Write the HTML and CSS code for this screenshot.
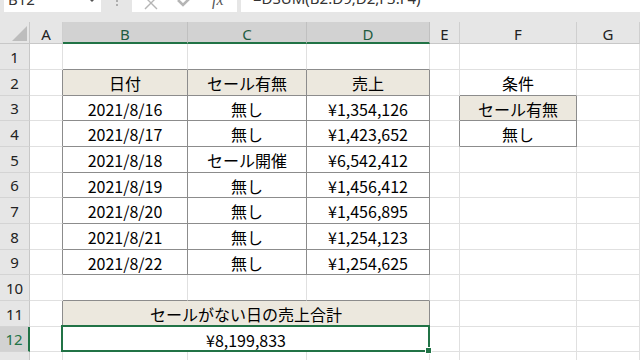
FILE: index.html
```html
<!DOCTYPE html>
<html lang="ja">
<head>
<meta charset="utf-8">
<link rel="stylesheet" href="styles.css">
</head>
<body>
<div class="app">
  <div class="fbar">
    <div class="namebox"><span class="nb-text">B12</span><svg class="nb-arrow" width="8" height="5" viewBox="0 0 8 5"><path d="M0 0 L4 4 L8 0 Z" fill="#555"/></svg></div>
    <div class="fsep"><svg width="4" height="10" viewBox="0 0 4 10"><circle cx="2" cy="1" r="1" fill="#9a9a9a"/><circle cx="2" cy="5" r="1" fill="#9a9a9a"/></svg></div>
    <div class="fbtns">
      <svg class="ico" width="14" height="12" viewBox="0 0 14 12"><path d="M1 -3 L13 9 M13 -3 L1 9" stroke="#b5b5b5" stroke-width="1.4" fill="none"/></svg>
      <svg class="ico" width="16" height="12" viewBox="0 0 16 12"><path d="M1 0 L6 5 L15 -4" stroke="#b5b5b5" stroke-width="2.6" fill="none"/></svg>
      <span class="fx">fx</span>
    </div>
    <div class="formula"><span class="f-text">=DSUM(B2:D9,D2,F3:F4)</span></div>
  </div>
  <div class="sheet">
    <div class="corner"><svg width="30" height="22" viewBox="0 0 30 22"><path d="M27 4 L27 19 L12 19 Z" fill="#bdbdbd"/></svg></div>
    <div class="ch">A</div>
    <div class="ch sel">B</div>
    <div class="ch sel">C</div>
    <div class="ch sel">D</div>
    <div class="ch">E</div>
    <div class="ch">F</div>
    <div class="ch">G</div>

    <div class="rh">1</div>
    <div class="c"></div>
    <div class="c tt"></div>
    <div class="c tt"></div>
    <div class="c tt"></div>
    <div class="c"></div>
    <div class="c"></div>
    <div class="c"></div>

    <div class="rh">2</div>
    <div class="c tl"></div>
    <div class="c t h">日付</div>
    <div class="c t h">セール有無</div>
    <div class="c t h">売上</div>
    <div class="c"></div>
    <div class="c tt">条件</div>
    <div class="c"></div>

    <div class="rh">3</div>
    <div class="c tl"></div>
    <div class="c t">2021/8/16</div>
    <div class="c t">無し</div>
    <div class="c t">¥1,354,126</div>
    <div class="c tl"></div>
    <div class="c t h">セール有無</div>
    <div class="c"></div>

    <div class="rh">4</div>
    <div class="c tl"></div>
    <div class="c t">2021/8/17</div>
    <div class="c t">無し</div>
    <div class="c t">¥1,423,652</div>
    <div class="c tl"></div>
    <div class="c t">無し</div>
    <div class="c"></div>

    <div class="rh">5</div>
    <div class="c tl"></div>
    <div class="c t">2021/8/18</div>
    <div class="c t">セール開催</div>
    <div class="c t">¥6,542,412</div>
    <div class="c"></div>
    <div class="c"></div>
    <div class="c"></div>

    <div class="rh">6</div>
    <div class="c tl"></div>
    <div class="c t">2021/8/19</div>
    <div class="c t">無し</div>
    <div class="c t">¥1,456,412</div>
    <div class="c"></div>
    <div class="c"></div>
    <div class="c"></div>

    <div class="rh">7</div>
    <div class="c tl"></div>
    <div class="c t">2021/8/20</div>
    <div class="c t">無し</div>
    <div class="c t">¥1,456,895</div>
    <div class="c"></div>
    <div class="c"></div>
    <div class="c"></div>

    <div class="rh">8</div>
    <div class="c tl"></div>
    <div class="c t">2021/8/21</div>
    <div class="c t">無し</div>
    <div class="c t">¥1,254,123</div>
    <div class="c"></div>
    <div class="c"></div>
    <div class="c"></div>

    <div class="rh">9</div>
    <div class="c tl"></div>
    <div class="c t">2021/8/22</div>
    <div class="c t">無し</div>
    <div class="c t">¥1,254,625</div>
    <div class="c"></div>
    <div class="c"></div>
    <div class="c"></div>

    <div class="rh">10</div>
    <div class="c"></div>
    <div class="c tt"></div>
    <div class="c tt"></div>
    <div class="c tt"></div>
    <div class="c"></div>
    <div class="c"></div>
    <div class="c"></div>

    <div class="rh">11</div>
    <div class="c tl"></div>
    <div class="c t h span3">セールがない日の売上合計</div>
    <div class="c"></div>
    <div class="c"></div>
    <div class="c"></div>

    <div class="rh sel">12</div>
    <div class="c tl"></div>
    <div class="c t span3 active">¥8,199,833<span class="handle"></span></div>
    <div class="c"></div>
    <div class="c"></div>
    <div class="c"></div>

    <div class="rh">13</div>
    <div class="c"></div>
    <div class="c"></div>
    <div class="c"></div>
    <div class="c"></div>
    <div class="c"></div>
    <div class="c"></div>
    <div class="c"></div>
  </div>
</div>
</body>
</html>
```

FILE: styles.css
```css
* { box-sizing: border-box; }
html, body {
  margin: 0;
  padding: 0;
  width: 640px;
  height: 360px;
  overflow: hidden;
  background: #ffffff;
}
.app {
  width: 640px;
  height: 360px;
  overflow: hidden;
  display: flex;
  flex-direction: column;
}
.fbar {
  height: 22px;
  flex: none;
  background: #e6e6e6;
  display: flex;
  align-items: flex-start;
}
.namebox {
  margin-left: 4px;
  width: 97px;
  height: 12px;
  background: #fff;
  overflow: hidden;
  position: relative;
  display: flex;
  align-items: flex-start;
}
.nb-text {
  font-family: "Noto Sans", sans-serif;
  font-size: 15px;
  line-height: 15px;
  color: #333;
  margin-top: -8px;
  margin-left: 4px;
  flex: 1;
}
.nb-arrow {
  margin-right: 5px;
  margin-top: -2px;
}
.fsep {
  width: 31px;
  height: 12px;
  display: flex;
  justify-content: center;
}
.fbtns {
  width: 105px;
  height: 12px;
  background: #fff;
  display: flex;
  align-items: flex-start;
  padding-left: 12px;
  gap: 19px;
  overflow: hidden;
}
.fx {
  font-family: "Liberation Serif", serif;
  font-style: italic;
  font-size: 16px;
  line-height: 16px;
  color: #555;
  margin-top: -8px;
}
.formula {
  margin-left: 4px;
  flex: 1;
  height: 12px;
  background: #fff;
  overflow: hidden;
}
.f-text {
  display: block;
  font-family: "Noto Sans", sans-serif;
  font-size: 15px;
  line-height: 15px;
  color: #333;
  margin-top: -9px;
  margin-left: 12px;
}
.sheet {
  flex: 1;
  display: grid;
  grid-template-columns: 30px 33px 125px 119px 123px 30px 117px 63px;
  grid-template-rows: 22px 26px 26px 25px 26px 26px 25px 26px 26px 25px 26px 26px 25px 26px;
  overflow: hidden;
}
.corner {
  background: #e6e6e6;
  border-right: 1px solid #c8c8c8;
  border-bottom: 1px solid #c8c8c8;
}
.corner svg { display: block; }
.ch {
  background: #e6e6e6;
  border-right: 1px solid #cfcfcf;
  border-bottom: 1px solid #c8c8c8;
  font-family: "Noto Sans", sans-serif;
  font-size: 15px;
  color: #222;
  display: flex;
  align-items: center;
  justify-content: center;
  padding-top: 2px;
}
.ch.sel {
  background: #d2d2d2;
  color: #1f5c40;
  border-right-color: #c0c0c0;
  border-bottom: 2px solid #217346;
  padding-top: 3px;
}
.rh {
  background: #e6e6e6;
  border-right: 1px solid #c8c8c8;
  border-bottom: 1px solid #d4d4d4;
  font-family: "Noto Sans", sans-serif;
  font-size: 15px;
  color: #222;
  display: flex;
  align-items: center;
  justify-content: center;
}
.rh.sel {
  background: #d2d2d2;
  color: #217346;
  border-right: 2px solid #217346;
}
.c {
  border-right: 1px solid #e0e0e0;
  border-bottom: 1px solid #e0e0e0;
  font-family: "Noto Sans CJK JP", "Noto Sans", sans-serif;
  font-size: 16px;
  color: #000;
  display: flex;
  align-items: center;
  justify-content: center;
  white-space: nowrap;
  padding-top: 1px;
}
.c.tt { border-bottom-color: #8c8c8c; }
.c.tl { border-right-color: #8c8c8c; }
.c.t {
  border-right-color: #8c8c8c;
  border-bottom-color: #8c8c8c;
}
.c.h { background: #ece8de; }
.span3 { grid-column: span 3; }
.active { position: relative; }
.active::after {
  content: "";
  position: absolute;
  left: -2px;
  top: -2px;
  right: -1px;
  bottom: -1px;
  border: 2px solid #217346;
  pointer-events: none;
}
.handle {
  position: absolute;
  right: -3px;
  bottom: -3px;
  width: 5px;
  height: 5px;
  background: #217346;
  border: 1px solid #fff;
  box-sizing: content-box;
  z-index: 2;
}
```
